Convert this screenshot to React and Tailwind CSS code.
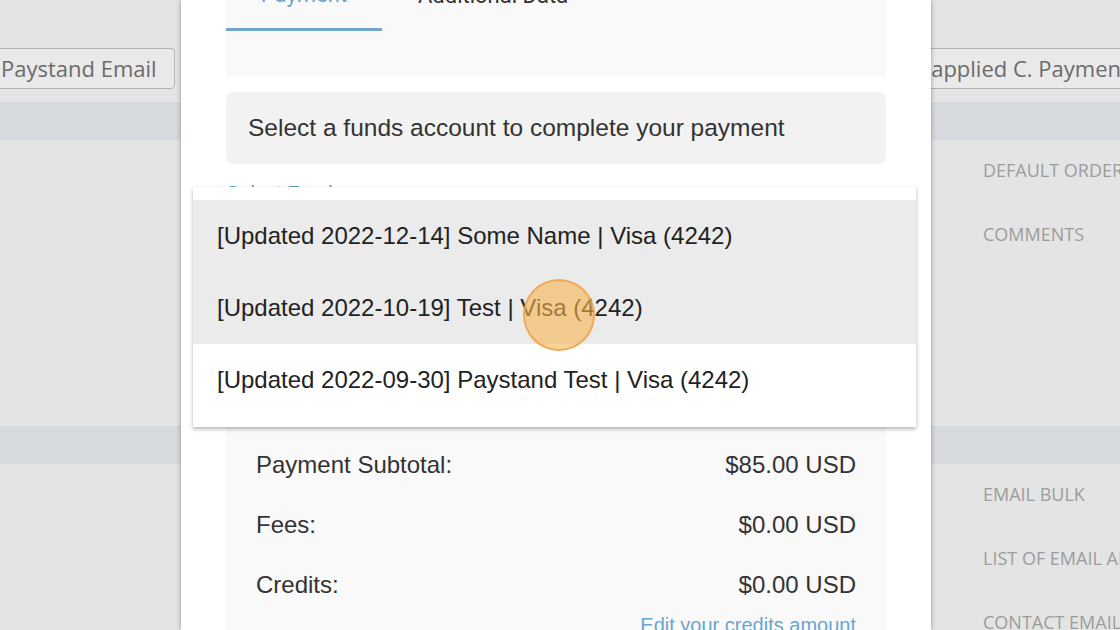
import React from "react";

const funds = [
  { label: "[Updated 2022-12-14] Some Name | Visa (4242)", active: true },
  { label: "[Updated 2022-10-19] Test | Visa (4242)", active: true },
  { label: "[Updated 2022-09-30] Paystand Test | Visa (4242)", active: false },
];

const totals = [
  { label: "Payment Subtotal:", value: "$85.00 USD" },
  { label: "Fees:", value: "$0.00 USD" },
  { label: "Credits:", value: "$0.00 USD" },
];

const SideLabel = ({ children }) => (
  <div className="h-[64px] leading-[64px] pl-[983px] text-[18px] text-[#9c9c9c] uppercase whitespace-nowrap">
    {children}
  </div>
);

const App = () => {
  return (
    <div className="relative w-[1120px] h-[630px] overflow-hidden bg-[#e4e4e4] font-['Open_Sans',sans-serif]">
      {/* page behind the dialog */}
      <div className="pt-[48px]">
        <div className="flex items-center whitespace-nowrap">
          <button className="-ml-[20px] h-[41px] pl-[20px] pr-[17px] rounded-[4px] border border-[#b3b3b3] bg-[#e9e9e9] text-[22px] text-[#6b6b6b]">
            Paystand Email
          </button>
          <button className="ml-[706px] h-[41px] px-[20px] rounded-[4px] border border-[#b3b3b3] bg-[#e9e9e9] text-[22px] text-[#6b6b6b]">
            Unapplied C. Payments
          </button>
        </div>
        <div className="mt-[13px] h-[38px] bg-[#d6d9dd]" />
        <div className="-mt-[2px]">
          <SideLabel>Default Order</SideLabel>
          <SideLabel>Comments</SideLabel>
        </div>
        <div className="mt-[160px] h-[38px] bg-[#d6d9dd]" />
        <div className="-mt-[2px]">
          <SideLabel>Email Bulk</SideLabel>
          <SideLabel>List of Email Addresses</SideLabel>
          <SideLabel>Contact Email</SideLabel>
        </div>
      </div>

      {/* dialog */}
      <div className="absolute left-[181px] top-0 w-[750px] h-full bg-white shadow-[0_0_5px_rgba(0,0,0,0.35)] font-['Liberation_Sans',Arial,sans-serif]">
        <div className="px-[45px] -mt-[40px]">
          <div className="h-[116px] bg-[#f9f9f9]">
            <div className="flex font-['Roboto',sans-serif] text-[22px]">
              <div className="w-[156px] h-[71px] flex items-center justify-center border-b-[3px] border-[#6fa6c9] text-[#6aa6cc]">
                Payment
              </div>
              <div className="h-[71px] px-[36px] flex items-center text-[#333]">
                Additional Data
              </div>
            </div>
          </div>

          <div className="mt-[16px] h-[72px] rounded-[8px] bg-[#f2f2f2] px-[22px] flex items-center text-[24.5px] text-[#333]">
            Select a funds account to complete your payment
          </div>

          <div className="mt-[14px] text-[20px] text-[#5f9fc6]">Select Funds</div>
          <div className="mt-[8px] h-[211px]" />

          <div className="bg-[#f9f9f9] pt-[8px] pb-[40px] px-[30px] text-[24px] text-[#333]">
            {totals.map((t) => (
              <div key={t.label} className="h-[60px] flex items-center justify-between">
                <span>{t.label}</span>
                <span>{t.value}</span>
              </div>
            ))}
            <div className="text-right text-[20px] leading-[20px] text-[#6aa6cc]">
              Edit your credits amount
            </div>
          </div>
        </div>

        {/* funds dropdown */}
        <div className="absolute left-[12px] top-[187px] w-[723px] pt-[13px] pb-[11px] bg-white shadow-[0_2px_4px_rgba(0,0,0,0.3)]">
          {funds.map((f) => (
            <div
              key={f.label}
              className={`h-[72px] pl-[24px] flex items-center text-[24px] text-[#222] ${f.active ? "bg-[#ebebeb]" : "bg-white"}`}
            >
              {f.label}
            </div>
          ))}
        </div>
      </div>

      {/* click marker */}
      <div className="absolute left-[523px] top-[279px] w-[72px] h-[72px] rounded-full bg-[#f8b44f]/60 border-2 border-[#eea04a]/80" />
    </div>
  );
};

export default App;
